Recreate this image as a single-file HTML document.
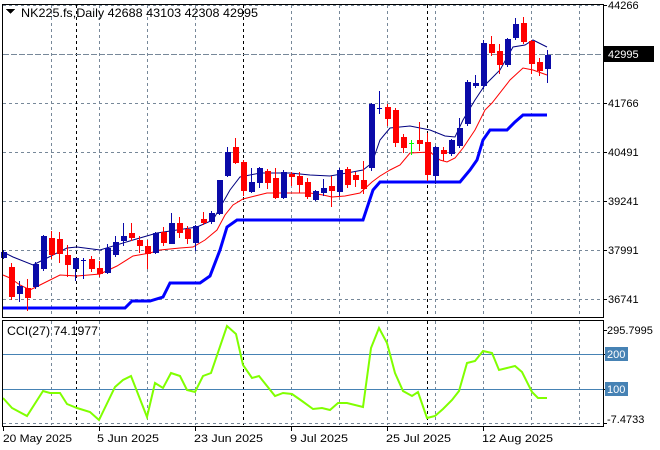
<!DOCTYPE html>
<html><head><meta charset="utf-8"><style>
body{margin:0;background:#fff;width:660px;height:450px;overflow:hidden}
svg{display:block}
text{font-family:"Liberation Sans","DejaVu Sans",sans-serif;font-size:11px;fill:#000}
</style></head><body>
<svg id="s" width="660" height="450" viewBox="0 0 660 450" xmlns="http://www.w3.org/2000/svg" shape-rendering="crispEdges">
<rect width="660" height="450" fill="#fff"/>
<g id="grid" stroke="#778899" stroke-width="1" stroke-dasharray="3,3" fill="none"></g>
<g id="sep" stroke="#000" stroke-width="1" stroke-dasharray="3,3" fill="none">
<line x1="76.5" y1="5" x2="76.5" y2="317"/><line x1="243.5" y1="5" x2="243.5" y2="317"/><line x1="427.5" y1="5" x2="427.5" y2="317"/>
<line x1="76.5" y1="321" x2="76.5" y2="425"/><line x1="243.5" y1="321" x2="243.5" y2="425"/><line x1="427.5" y1="321" x2="427.5" y2="425"/>
</g>
<line x1="3" y1="54.5" x2="603" y2="54.5" stroke="#778899" stroke-dasharray="6,2"/>
<g fill="none" shape-rendering="auto">
<polyline stroke="#0000ff" stroke-width="3" points="3,308 125,308 132,301 150,301 163,297 170,283 200,283 210,276 220,250 227,227 237,220 363,220 368,205 373,190 380,182 460,182 470,170 477,160 483,140 490,130 507,130 515,122 523,115 547,115"/>
<polyline stroke="#000080" stroke-width="1" points="3,252 13,257 33,265 43,260 67,248 77,247 100,250 133,240 157,233 197,227 213,220 230,190 240,177 260,173 290,173 310,175 330,176 347,173 363,170 372,163 380,140 390,128 410,126 430,130 445,136 455,137 463,120 475,100 485,85 500,70 513,47 525,45 533,40 547,47"/>
<polyline stroke="#ff0000" stroke-width="1" points="3,275 10,278 20,285 30,290 40,285 60,275 77,276 100,274 117,266 133,256 150,253 160,250 180,248 193,247 205,240 217,230 225,215 233,205 243,199 255,196 267,193 290,193 310,193 323,195 332,197 345,196 360,193 372,182 380,176 390,170 400,165 410,153 430,152 440,160 447,162 455,158 463,148 475,130 485,110 492,103 510,80 523,68 533,70 547,75"/>
</g>
<g id="c"></g>
<!-- CCI -->
<line x1="3" y1="354.5" x2="603" y2="354.5" stroke="#4682b4"/>
<line x1="3" y1="389.5" x2="603" y2="389.5" stroke="#4682b4"/>
<line x1="3" y1="423.5" x2="603" y2="423.5" stroke="#778899" stroke-dasharray="3,3"/>
<polyline fill="none" stroke="#80ff00" stroke-width="2" shape-rendering="auto" points="3,398 12,408 27,416 43,391 50,393 60,393 67,404 77,408 90,412 99,420 115,387 123,380 131,376 147,417 155,383 163,388 171,373 180,376 187,390 195,392 203,376 211,373 227,326 236,334 243,365 252,378 259,376 275,396 283,393 292,394 302,401 313,409 322,408 330,410 338,403 347,403 363,407 371,348 379,328 387,343 395,373 403,391 412,396 418,392 427,418 435,416 443,409 452,400 459,391 467,363 475,361 483,351 492,353 499,370 507,368 515,366 522,372 532,392 538,398 547,398"/>
<!-- frames -->
<rect x="2.5" y="4.5" width="601" height="313" fill="none" stroke="#000"/>
<rect x="2.5" y="320.5" width="601" height="106" fill="none" stroke="#000"/>
<g id="ticks" stroke="#000"></g>
<!-- labels -->
<path d="M6,9 h9 l-4.5,5 z" fill="#000"/>
<text x="21" y="17" textLength="237" lengthAdjust="spacingAndGlyphs" style="font-size:12px">NK225.fs,Daily  42688 43103 42308 42995</text>
<text x="7" y="335" textLength="91" lengthAdjust="spacingAndGlyphs" style="font-size:12px">CCI(27) 74.1977</text>
<text x="608" y="9">44266</text>
<rect x="604" y="46" width="50" height="16" fill="#000"/>
<text x="608" y="58" style="fill:#fff">42995</text>
<text x="608" y="107">41766</text>
<text x="608" y="156">40491</text>
<text x="608" y="205">39241</text>
<text x="608" y="254">37991</text>
<text x="608" y="303">36741</text>
<text x="607" y="334">295.7995</text>
<rect x="605" y="347" width="23" height="14" fill="#4682b4"/>
<text x="607" y="358" style="fill:#fff">200</text>
<rect x="605" y="382" width="23" height="14" fill="#4682b4"/>
<text x="607" y="393" style="fill:#fff">100</text>
<text x="607" y="423">-7.4733</text>
<g style="font-size:12px">
<text x="3" y="442" textLength="69" lengthAdjust="spacingAndGlyphs">20 May 2025</text>
<text x="97" y="442" textLength="62" lengthAdjust="spacingAndGlyphs">5 Jun 2025</text>
<text x="194" y="442" textLength="69" lengthAdjust="spacingAndGlyphs">23 Jun 2025</text>
<text x="290" y="442" textLength="58" lengthAdjust="spacingAndGlyphs">9 Jul 2025</text>
<text x="386" y="442" textLength="65" lengthAdjust="spacingAndGlyphs">25 Jul 2025</text>
<text x="482" y="442" textLength="71" lengthAdjust="spacingAndGlyphs">12 Aug 2025</text>
</g>
</svg>
<script>
var NS="http://www.w3.org/2000/svg";
function el(p,t,a){var e=document.createElementNS(NS,t);for(var k in a)e.setAttribute(k,a[k]);p.appendChild(e);return e;}
var g=document.getElementById('grid');
for(var k=1;k<=12;k++){var x=3+48*k+0.5;el(g,'line',{x1:x,y1:5,x2:x,y2:317});el(g,'line',{x1:x,y1:321,x2:x,y2:425});}
[5,103,152,201,250,299].forEach(function(y){el(g,'line',{x1:3,y1:y+0.5,x2:603,y2:y+0.5});});
var t=document.getElementById('ticks');
[5,54,103,152,201,250,299].forEach(function(y){el(t,'line',{x1:603,y1:y+0.5,x2:607,y2:y+0.5});});
[330,354,389,423].forEach(function(y){el(t,'line',{x1:603,y1:y+0.5,x2:607,y2:y+0.5});});
[3,99,195,291,387,483].forEach(function(x){el(t,'line',{x1:x+0.5,y1:427,x2:x+0.5,y2:431});});
var D=[[257,252,250,258],[267,296,263,299],[293,286,281,301],[288,297,279,310],[286,264,262,288],[268,236,235,270],[238,254,231,258],[239,253,232,262],[255,264,245,276],[268,258,258,280],[260,260,258,278],[259,268,256,271],[268,273,261,276],[272,248,244,273],[254,242,236,256],[240,236,223,245],[233,237,223,240],[240,245,236,252],[246,253,240,268],[252,233,232,253],[232,242,227,245],[243,223,213,243],[223,232,217,237],[229,238,226,243],[242,226,225,250],[219,222,212,224],[221,213,211,223],[213,180,180,214],[175,152,147,176],[147,162,138,163],[162,190,160,195],[191,182,168,192],[182,168,167,187],[171,182,169,188],[178,197,168,198],[197,172,170,198],[174,176,172,185],[176,184,172,192],[182,196,178,198],[199,191,190,200],[192,188,179,195],[186,190,176,206],[191,170,168,195],[169,184,167,187],[175,179,172,186],[180,188,161,193],[167,104,103,170],[108,108,91,113],[107,118,104,125],[110,142,108,146],[137,147,134,152],[143,143,140,154],[140,143,122,150],[142,174,133,180],[175,147,146,183],[150,153,147,160],[153,140,139,155],[145,128,118,147],[123,82,80,125],[85,83,75,87],[85,43,40,88],[44,52,36,55],[51,64,44,73],[64,39,38,66],[37,24,18,39],[23,41,17,43],[41,63,40,73],[62,70,58,75],[68,55,50,82]];
var c=document.getElementById('c');
D.forEach(function(d,i){var x=3+8*i;var o=d[0],cl=d[1],h=d[2],l=d[3];
var col;if(o==cl)col=(i==51?'#00ff00':'#0000b0');else col=cl<o?'#0a0aa8':'#ff0000';
el(c,'rect',{x:x,y:h,width:1,height:l-h+1,fill:col});
if(o==cl){el(c,'rect',{x:x-2,y:o,width:5,height:1,fill:col});}
else{var top=Math.min(o,cl),b=Math.max(o,cl);el(c,'rect',{x:x-2,y:top,width:6,height:b-top+1,fill:col});}
});
</script>
</body></html>
